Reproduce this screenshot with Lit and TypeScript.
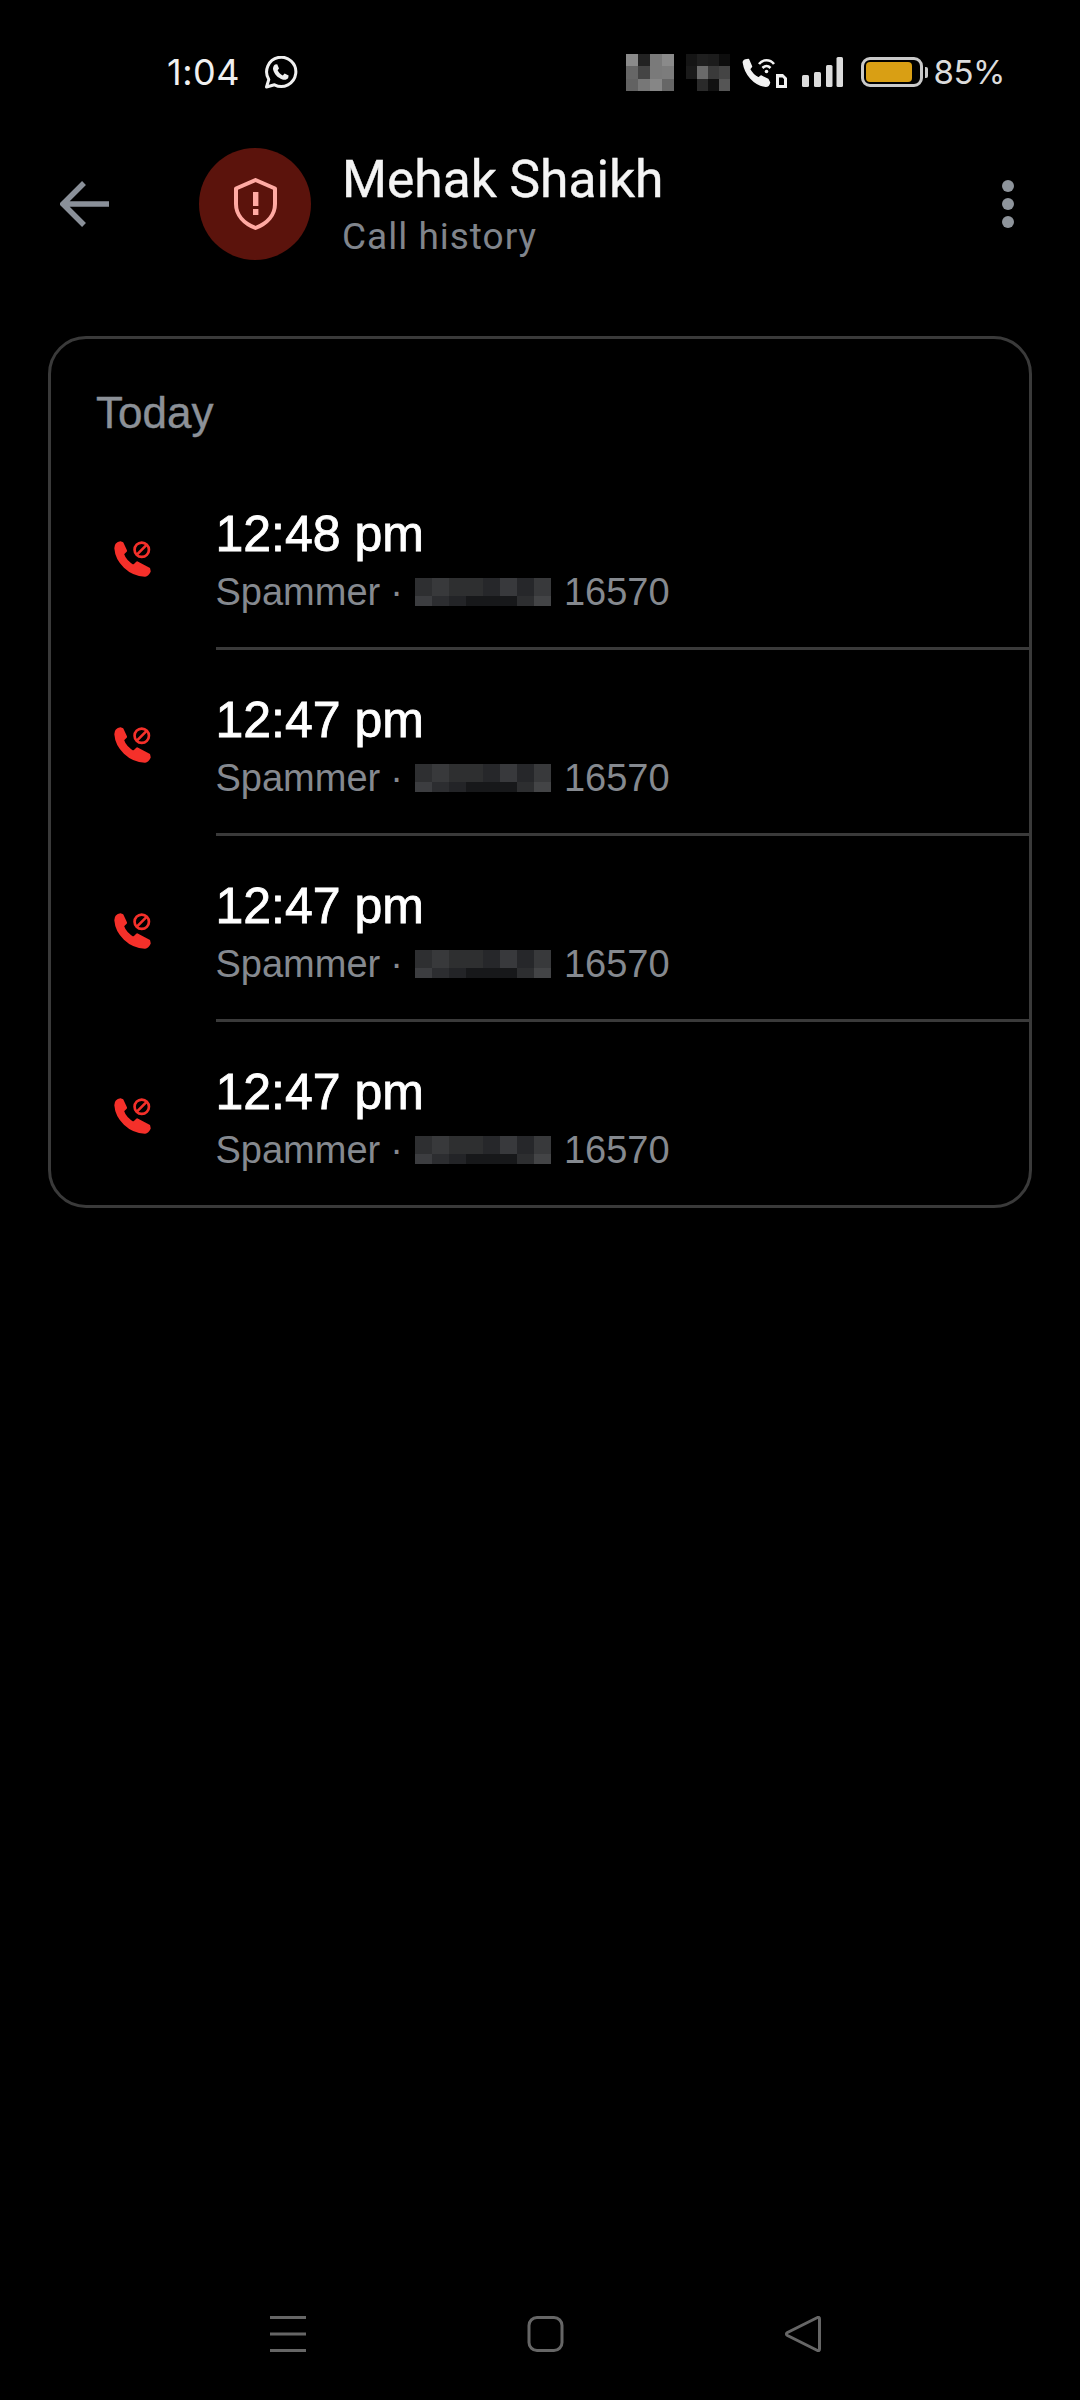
import { LitElement, html, css, svg } from 'lit';
import { customElement } from 'lit/decorators.js';

const STATUS_BLUR_A = [
  ['#8a8a8a', '#222222', '#7a7a7a', '#8a8a8a'],
  ['#666666', '#444444', '#7a7a7a', '#7c7c7c'],
  ['#626262', '#777777', '#868686', '#666666'],
];
const STATUS_BLUR_B = [
  ['#151515', '#1f1f1f', '#1c1c1c', '#0d0d0d'],
  ['#1a1a1a', '#6a6a6a', '#3a3a3a', '#444444'],
  ['#000000', '#2a2a2a', '#111111', '#555555'],
];
const NUMBER_BLUR = [
  ['#2e2f31', '#38393b', '#2e2f30', '#2e2f30', '#26272a', '#38393c', '#26272a', '#38393b'],
  ['#3c3d40', '#2c2d30', '#232427', '#17181a', '#17181a', '#17181a', '#2d2e30', '#434446'],
];

const CALLS = ['12:48 pm', '12:47 pm', '12:47 pm', '12:47 pm'];

// mosaic used where the screenshot has censored content
function mosaic(rows: string[][], cw: number, heights: number[]) {
  let y = 0;
  const cells = rows.map((row, r) => {
    const out = row.map(
      (fill, c) => svg`<rect x=${c * cw} y=${y} width=${cw} height=${heights[r]} fill=${fill} />`
    );
    y += heights[r];
    return out;
  });
  return html`<svg
    width=${rows[0].length * cw}
    height=${y}
    viewBox="0 0 ${rows[0].length * cw} ${y}"
    shape-rendering="crispEdges"
  >
    ${cells}
  </svg>`;
}

@customElement('app-root')
export class AppRoot extends LitElement {
  static styles = css`
    :host {
      display: flex;
      flex-direction: column;
      height: 2400px;
      background: #000;
      font-family: 'Liberation Sans', Arial, sans-serif;
      overflow: hidden;
    }

    .status {
      display: flex;
      align-items: center;
      height: 144px;
      padding: 0 75px 0 167px;
      color: #f0f0f0;
      font-family: Inter, 'Liberation Sans', sans-serif;
    }

    .status__time {
      font-size: 36px;
      letter-spacing: 0.5px;
      margin-right: 24px;
    }

    .status__right {
      display: flex;
      align-items: center;
      margin-left: auto;
    }

    .status__blur-b {
      margin-left: 12px;
      margin-right: 12px;
    }

    .status__signal {
      margin-left: 15px;
      margin-right: 18px;
    }

    .status__pct {
      font-size: 33px;
      color: #dcdcdc;
      margin-left: 6px;
      letter-spacing: -0.5px;
    }

    .status svg {
      display: block;
    }

    .battery {
      box-sizing: border-box;
      width: 62px;
      height: 30px;
      border: 3px solid #c9c9c9;
      border-radius: 9px;
      padding: 2px;
    }

    .battery__fill {
      width: 46px;
      height: 100%;
      background: #d99f14;
      border-radius: 4px;
    }

    .battery__nub {
      width: 3px;
      height: 11px;
      margin-left: 2px;
      background: #c9c9c9;
      border-radius: 0 2px 2px 0;
    }

    .header {
      display: flex;
      align-items: center;
      padding: 4px 66px 0 60px;
      height: 112px;
      margin-bottom: 76px;
    }

    .header__back {
      display: block;
      margin-right: 90px;
    }

    .header__avatar {
      display: flex;
      align-items: center;
      justify-content: center;
      flex: none;
      width: 112px;
      height: 112px;
      border-radius: 50%;
      background: #5b130c;
      margin-right: 31px;
    }

    .header__text {
      flex: 1;
      font-family: Roboto, 'Liberation Sans', sans-serif;
    }

    .header__name {
      font-size: 51.5px;
      line-height: 60px;
      color: #f4f4f4;
      margin-top: 4px;
      -webkit-text-stroke: 0.4px #f4f4f4;
    }

    .header__sub {
      font-size: 37px;
      line-height: 50px;
      color: #80858c;
      margin-top: 2px;
      letter-spacing: 1px;
    }

    .header__menu {
      display: flex;
      flex-direction: column;
      gap: 6px;
    }

    .header__menu span {
      width: 12px;
      height: 12px;
      border-radius: 50%;
      background: #8e949b;
    }

    .card {
      box-sizing: border-box;
      margin: 0 48px;
      border: 3px solid #3a3a3a;
      border-radius: 38px;
      overflow: hidden;
    }

    .card__title {
      height: 125px;
      box-sizing: border-box;
      padding: 44px 0 0 45px;
      font-size: 44px;
      line-height: 60px;
      color: #8c9198;
      -webkit-text-stroke: 0.4px #8c9198;
    }

    .row {
      display: flex;
      align-items: center;
    }

    .row__icon {
      display: block;
      flex: none;
      margin: 3px 65px 0 62.5px;
    }

    .row__body {
      flex: 1;
      box-sizing: border-box;
      height: 186px;
      padding-top: 41px;
      border-bottom: 3px solid #3a3a3a;
    }

    .row:last-child .row__body {
      border-bottom: none;
      height: 183px;
    }

    .row__time {
      font-size: 50px;
      line-height: 58px;
      color: #fff;
      -webkit-text-stroke: 0.8px #fff;
    }

    .row__sub {
      display: flex;
      align-items: center;
      font-size: 38px;
      line-height: 58px;
      color: #85898f;
    }

    .row__sep {
      margin: 0 12px 0 10px;
    }

    .row__sub svg {
      display: block;
      margin-right: 13px;
    }

    .nav {
      display: flex;
      align-items: center;
      justify-content: center;
      gap: 218px;
      margin-top: auto;
      padding: 0 0 48px 11px;
    }

    .nav svg {
      display: block;
    }
  `;

  render() {
    return html`
      ${this.statusBar} ${this.header}
      <section class="card">
        <div class="card__title">Today</div>
        ${CALLS.map(
          time => html`<div class="row">
            ${this.callIcon}
            <div class="row__body">
              <div class="row__time">${time}</div>
              <div class="row__sub">
                Spammer<span class="row__sep">·</span>${mosaic(NUMBER_BLUR, 17, [18, 10])}16570
              </div>
            </div>
          </div>`
        )}
      </section>
      ${this.navBar}
    `;
  }

  private get statusBar() {
    return html`<div class="status">
      <span class="status__time">1:04</span>
      <svg width="34" height="33" viewBox="0 0 34 33" fill="none">
        <path
          d="M2.5 31 L4.8 23.5 A14.6 14.6 0 1 1 10.5 28.8 Z"
          stroke="#f0f0f0"
          stroke-width="3"
          stroke-linejoin="round"
        />
        <path
          d="M11 8.5 L13.2 8.2 L15 12.4 L13.6 14.2 C14.6 16.4 16.4 18.2 18.8 19.4 L20.6 17.6 L24.6 19.6 L24.2 22 C23 23.8 20.6 24.2 18.4 23.4 C13.8 21.8 10.4 18.4 9.2 14 C8.6 11.8 9.4 9.8 11 8.5 Z"
          fill="#f0f0f0"
        />
      </svg>
      <div class="status__right">
        ${mosaic(STATUS_BLUR_A, 12, [12, 13, 12])}
        <div class="status__blur-b">${mosaic(STATUS_BLUR_B, 11, [12, 13, 12])}</div>
        <svg width="45" height="31" viewBox="0 0 45 31" fill="none">
          <path
            d="M1.5 6 C1 4.5 2 3.5 3.5 3 L6.5 2.5 L9.5 9.5 L7.5 12 C9.5 16 12.5 19 16.5 21 L19 19 L26 22.5 L27.5 25.5 C27 28 25 29.5 22.5 29 C12 27.5 3 17 1.5 6 Z"
            fill="#f2f2f2"
            stroke="#f2f2f2"
            stroke-width="1.5"
            stroke-linejoin="round"
          />
          <path d="M17 7 C21 2 28 2 32 7" stroke="#f2f2f2" stroke-width="2.6" />
          <path d="M20.5 11 C23 8.4 26 8.4 28.5 11" stroke="#f2f2f2" stroke-width="2.6" />
          <circle cx="24.5" cy="14.5" r="1.8" fill="#f2f2f2" />
          <path
            fill-rule="evenodd"
            d="M34 17 H41 L45 21 V31 H34 Z M37 20.5 V28 H42 V22 L40.5 20.5 Z"
            fill="#f2f2f2"
          />
        </svg>
        <svg class="status__signal" width="41" height="30" viewBox="0 0 41 30" fill="#dcdcdc">
          <rect x="0" y="18" width="7" height="12" rx="1.5" />
          <rect x="12" y="15" width="7" height="15" rx="1.5" />
          <rect x="24" y="8" width="6.5" height="22" rx="1.5" />
          <rect x="34.5" y="0" width="6.5" height="30" rx="1.5" />
        </svg>
        <div class="battery"><div class="battery__fill"></div></div>
        <div class="battery__nub"></div>
        <span class="status__pct">85%</span>
      </div>
    </div>`;
  }

  private get header() {
    return html`<div class="header">
      <svg class="header__back" width="49" height="46" viewBox="0 0 49 46" fill="none">
        <path d="M49 23 H4 M24 2 L3 23 L24 44" stroke="#8a9099" stroke-width="5.5" />
      </svg>
      <div class="header__avatar">
        <svg width="43" height="52" viewBox="0 0 43 52" fill="none">
          <path
            d="M21.5 2 L41 10.5 V26 C41 37 33 45.5 21.5 50 C10 45.5 2 37 2 26 V10.5 Z"
            stroke="#ffaaa3"
            stroke-width="4"
            stroke-linejoin="round"
          />
          <rect x="19" y="14" width="5.4" height="14" fill="#ffaaa3" />
          <rect x="19" y="31" width="5.4" height="6" fill="#ffaaa3" />
        </svg>
      </div>
      <div class="header__text">
        <div class="header__name">Mehak Shaikh</div>
        <div class="header__sub">Call history</div>
      </div>
      <div class="header__menu"><span></span><span></span><span></span></div>
    </div>`;
  }

  private get callIcon() {
    return html`<svg class="row__icon" width="37" height="37" viewBox="0 0 36 36" fill="none">
      <path
        d="M1.5 8 C1.5 5 3.5 3 6.5 2.5 L8 3 L11.5 10.5 L8.5 13.5 C10 18.5 14 22.5 19 25.5 L22.5 22 L34 28 L34.5 30.5 C33.5 32.5 32 34 30 34.5 C15 34 2.5 21.5 1.5 8 Z"
        fill="#f5302a"
        stroke="#f5302a"
        stroke-width="2.4"
        stroke-linejoin="round"
      />
      <circle cx="27" cy="9.5" r="7" stroke="#f5302a" stroke-width="2.6" />
      <path d="M22.5 14 L31.5 5" stroke="#f5302a" stroke-width="2.6" />
    </svg>`;
  }

  private get navBar() {
    return html`<nav class="nav">
      <svg width="40" height="36" viewBox="0 0 40 36" fill="#666666">
        <rect x="2" y="0" width="36" height="3" />
        <rect x="2" y="16.5" width="36" height="3" />
        <rect x="2" y="33" width="36" height="3" />
      </svg>
      <svg width="40" height="36" viewBox="0 0 40 36" fill="none">
        <rect x="3" y="1.5" width="33" height="33" rx="8" stroke="#666666" stroke-width="3" />
      </svg>
      <svg width="40" height="36" viewBox="0 0 40 36" fill="none">
        <path
          d="M35.5 3 V33 C35.5 34.5 34.5 35 33.5 34.5 L3.5 19.5 C2 18.5 2 17.5 3.5 16.5 L33.5 1.5 C34.5 1 35.5 1.5 35.5 3 Z"
          stroke="#666666"
          stroke-width="3"
        />
      </svg>
    </nav>`;
  }
}
